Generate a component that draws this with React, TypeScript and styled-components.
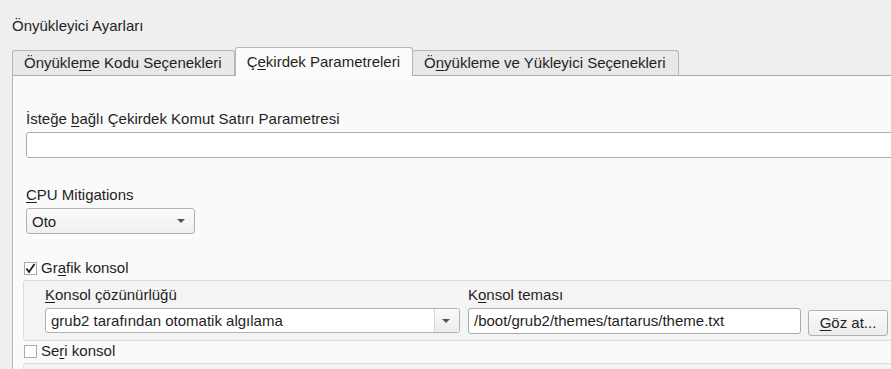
import styled, { createGlobalStyle } from 'styled-components'

const GlobalStyle = createGlobalStyle`
  html, body {
    margin: 0;
    padding: 0;
    background: #efefef;
    overflow: hidden;
  }
  body {
    font-family: 'Liberation Sans', Arial, sans-serif;
    font-size: 15px;
    color: #1f1f1f;
  }
`

const Page = styled.div`
  width: 1000px;
  padding: 17px 0 0 12px;
`

const Title = styled.div`
  line-height: 18px;
  height: 18px;
  margin-bottom: 12px;
`

const TabBar = styled.div`
  display: flex;
  align-items: flex-end;
  position: relative;
  z-index: 1;
  margin-bottom: -1px;
`

const Tab = styled.div<{ $active?: boolean }>`
  height: ${(p) => (p.$active ? 28 : 24)}px;
  line-height: ${(p) => (p.$active ? 27 : 24)}px;
  padding: 0 12px 0 11px;
  border: 1px solid #b6b6b6;
  border-bottom: ${(p) => (p.$active ? 'none' : '1px solid #aaaaaa')};
  border-radius: 3px 3px 0 0;
  background: ${(p) => (p.$active ? '#fbfbfb' : '#e8e8e8')};
  margin-left: ${(p) => (p.$active ? 0 : -1)}px;
  white-space: nowrap;

  &:first-child {
    margin-left: 0;
  }
`

const Panel = styled.div`
  border-top: 1px solid #aaaaaa;
  border-left: 1px solid #b6b6b6;
  background: #fafafa;
  padding: 34px 0 40px 10px;
  height: 400px;
`

const Mnemonic = styled.u`
  text-decoration: underline;
  text-underline-offset: 2px;
`

const FieldLabel = styled.div<{ $indent?: number }>`
  line-height: 18px;
  margin-left: ${(p) => p.$indent ?? 3}px;
  margin-bottom: 4px;
  white-space: nowrap;
`

const TextInput = styled.div<{ $width?: string }>`
  box-sizing: border-box;
  width: ${(p) => p.$width ?? '100%'};
  height: 26px;
  line-height: 24px;
  padding: 0 5px;
  background: #ffffff;
  border: 1px solid #ababab;
  border-radius: 3px;
  white-space: nowrap;
  overflow: hidden;
`

const Section = styled.div<{ $gap: number }>`
  margin-top: ${(p) => p.$gap}px;
`

const ComboBox = styled.div<{ $width: number; $editable?: boolean }>`
  box-sizing: border-box;
  width: ${(p) => p.$width}px;
  height: ${(p) => (p.$editable ? 25 : 26)}px;
  margin-top: ${(p) => (p.$editable ? 1 : 0)}px;
  display: flex;
  align-items: center;
  border: 1px solid #b2b2b2;
  border-radius: 3px;
  background: ${(p) =>
    p.$editable ? '#ffffff' : 'linear-gradient(#fbfbfb, #efefef)'};
  overflow: hidden;
`

const ComboText = styled.span`
  flex: 1;
  padding-left: 5px;
  line-height: 23px;
  white-space: nowrap;
`

const ComboButton = styled.span<{ $separated?: boolean }>`
  width: 24px;
  height: 100%;
  display: flex;
  align-items: center;
  justify-content: center;
  border-left: ${(p) => (p.$separated ? '1px solid #d4d4d4' : 'none')};
  background: ${(p) =>
    p.$separated ? 'linear-gradient(#fbfbfb, #ececec)' : 'transparent'};
`

const Arrow = styled.span`
  width: 0;
  height: 0;
  border-left: 4px solid transparent;
  border-right: 4px solid transparent;
  border-top: 4px solid #555555;
  margin-right: 2px;
`

const CheckRow = styled.div<{ $gap: number }>`
  display: flex;
  align-items: center;
  gap: 4px;
  margin-top: ${(p) => p.$gap}px;
  margin-left: 1px;
  height: 18px;
  line-height: 18px;
`

const CheckBox = styled.span`
  box-sizing: border-box;
  width: 13px;
  height: 13px;
  border: 1px solid #a9a9a9;
  background: #ffffff;
  display: flex;
  align-items: center;
  justify-content: center;
`

const GroupBox = styled.div<{ $open?: boolean }>`
  box-sizing: border-box;
  margin-top: 3px;
  border: 1px solid #dcdcdc;
  border-radius: 3px;
  background: #f4f4f4;
  padding: ${(p) => (p.$open ? '5px 0 4px 21px' : '0 0 60px 21px')};
`

const GroupGrid = styled.div`
  display: grid;
  grid-template-columns: 415px 333px auto;
  column-gap: 8px;
  align-items: start;
`

const Field = styled.div<{ $indent?: number }>`
  margin-left: ${(p) => p.$indent ?? 0}px;
`

const PushButton = styled.div`
  box-sizing: border-box;
  width: 80px;
  height: 26px;
  margin: 24px 0 0 -1px;
  line-height: 24px;
  text-align: center;
  border: 1px solid #b2b2b2;
  border-radius: 3px;
  background: linear-gradient(#fbfbfb, #ececec);
`

const Check = () => (
  <svg width="11" height="11" viewBox="0 0 11 11">
    <polyline
      points="1.5,5.5 4,9 9.5,1"
      fill="none"
      stroke="#1a1a1a"
      strokeWidth="1.8"
    />
  </svg>
)

export default function App() {
  return (
    <>
      <GlobalStyle />
      <Page>
        <Title>Önyükleyici Ayarları</Title>
        <TabBar>
          <Tab>
            Önyükle<Mnemonic>m</Mnemonic>e Kodu Seçenekleri
          </Tab>
          <Tab $active>
            Ç<Mnemonic>e</Mnemonic>kirdek Parametreleri
          </Tab>
          <Tab>
            Ö<Mnemonic>n</Mnemonic>yükleme ve Yükleyici Seçenekleri
          </Tab>
        </TabBar>
        <Panel>
          <FieldLabel>
            İsteğe <Mnemonic>b</Mnemonic>ağlı Çekirdek Komut Satırı Parametresi
          </FieldLabel>
          <Field $indent={3}>
            <TextInput />
          </Field>

          <Section $gap={28}>
            <FieldLabel>
              <Mnemonic>C</Mnemonic>PU Mitigations
            </FieldLabel>
            <Field $indent={3}>
              <ComboBox $width={169}>
                <ComboText>Oto</ComboText>
                <ComboButton>
                  <Arrow />
                </ComboButton>
              </ComboBox>
            </Field>
          </Section>

          <CheckRow $gap={25}>
            <CheckBox>
              <Check />
            </CheckBox>
            <span>
              Gr<Mnemonic>a</Mnemonic>fik konsol
            </span>
          </CheckRow>
          <GroupBox $open>
            <GroupGrid>
              <Field>
                <FieldLabel $indent={0}>
                  <Mnemonic>K</Mnemonic>onsol çözünürlüğü
                </FieldLabel>
                <ComboBox $width={415} $editable>
                  <ComboText>grub2 tarafından otomatik algılama</ComboText>
                  <ComboButton $separated>
                    <Arrow />
                  </ComboButton>
                </ComboBox>
              </Field>
              <Field>
                <FieldLabel $indent={0}>
                  K<Mnemonic>o</Mnemonic>nsol teması
                </FieldLabel>
                <TextInput $width="333px">
                  /boot/grub2/themes/tartarus/theme.txt
                </TextInput>
              </Field>
              <PushButton>
                <Mnemonic>G</Mnemonic>öz at...
              </PushButton>
            </GroupGrid>
          </GroupBox>

          <CheckRow $gap={1}>
            <CheckBox />
            <span>
              Se<Mnemonic>r</Mnemonic>i konsol
            </span>
          </CheckRow>
          <GroupBox />
        </Panel>
      </Page>
    </>
  )
}
